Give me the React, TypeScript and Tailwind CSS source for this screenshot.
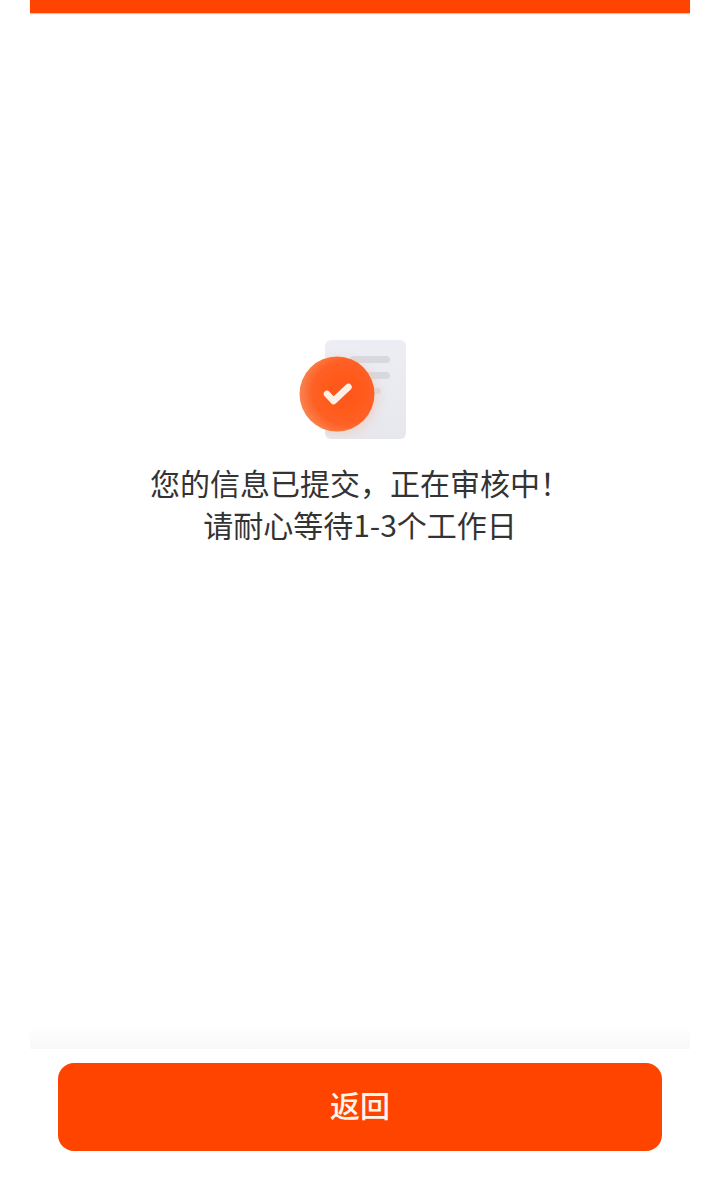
const FONT = "font-['Noto_Sans_CJK_SC','Noto_Sans',sans-serif]";

// Document with the orange check badge on top
function SubmittedIcon() {
  return (
    <svg width="140" height="110" viewBox="0 0 140 110" fill="none">
      <defs>
        <linearGradient id="paper" x1="0" y1="0" x2="0" y2="1">
          <stop offset="0" stopColor="#eceef4" />
          <stop offset="1" stopColor="#e7e8ee" />
        </linearGradient>
        <radialGradient id="badge" cx="0.6" cy="0.48" r="0.6">
          <stop offset="0" stopColor="#ff5518" />
          <stop offset="0.7" stopColor="#ff5f22" />
          <stop offset="1" stopColor="#f88450" />
        </radialGradient>
        <clipPath id="sheet">
          <rect x="35" y="10" width="81" height="99" rx="6" />
        </clipPath>
        <filter id="soft" x="-30%" y="-30%" width="160%" height="160%">
          <feGaussianBlur stdDeviation="6" />
        </filter>
        <filter id="edge" x="-10%" y="-10%" width="120%" height="120%">
          <feGaussianBlur stdDeviation="0.6" />
        </filter>
      </defs>
      <g filter="url(#edge)">
        <rect x="35" y="10" width="81" height="99" rx="6" fill="url(#paper)" />
        <rect x="60" y="26" width="40" height="7" rx="3.5" fill="#d8d9df" />
        <rect x="60" y="42" width="40" height="7" rx="3.5" fill="#d8d9df" />
        <rect x="60" y="58" width="31" height="6" rx="3" fill="#d8d9df" />
      </g>
      <g clipPath="url(#sheet)">
        <circle cx="50" cy="67" r="37" fill="#efc9bb" opacity="0.75" filter="url(#soft)" />
      </g>
      <g filter="url(#edge)">
        <circle cx="47" cy="64" r="37.5" fill="url(#badge)" />
        <path d="M37 64 L43.5 71 L58.5 57" stroke="#fff0e6" strokeWidth="6.5" strokeLinecap="round" strokeLinejoin="round" />
      </g>
    </svg>
  );
}

export default function App() {
  return (
    <div className={`${FONT} flex h-[1177px] flex-col bg-white px-[30px]`}>
      <div className="h-[13px] shrink-0 bg-[#ff4400] shadow-[0_1px_1px_rgba(180,90,30,0.35)]" />

      <main className="flex flex-1 flex-col items-center pt-[317px]">
        <SubmittedIcon />
        <p className="mt-[21px] text-center text-[30px] leading-[42px] text-[#333333]">
          您的信息已提交，正在审核中！
          <br />
          请耐心等待1-3个工作日
        </p>
      </main>

      <div className="h-[24px] shrink-0 bg-gradient-to-b from-white to-[#f8f8f8]" />
      <footer className="flex h-[128px] shrink-0 items-start bg-white px-[28px] pt-[14px]">
        <button className="h-[88px] w-full rounded-[16px] bg-[#ff4400] pb-[5px] text-[30px] font-medium text-[#fff5ea]">
          返回
        </button>
      </footer>
    </div>
  );
}
